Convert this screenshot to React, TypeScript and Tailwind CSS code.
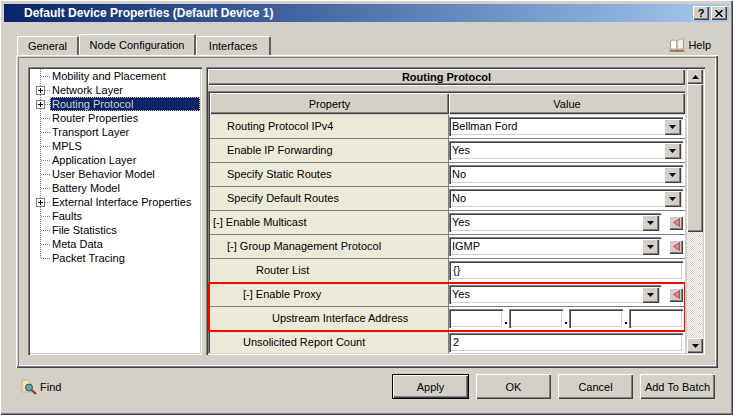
import type { ReactNode } from 'react'

const raised = 'shadow-[inset_1px_1px_0_#ffffff,inset_-1px_-1px_0_#404040,inset_-2px_-2px_0_#808080]'
const sunken = 'shadow-[inset_1px_1px_0_#808080,inset_2px_2px_0_#404040,inset_-1px_-1px_0_#ffffff,inset_-2px_-2px_0_#d4d0c8]'

const treeItems = [
  { label: 'Mobility and Placement' },
  { label: 'Network Layer', plus: true },
  { label: 'Routing Protocol', plus: true, selected: true },
  { label: 'Router Properties' },
  { label: 'Transport Layer' },
  { label: 'MPLS' },
  { label: 'Application Layer' },
  { label: 'User Behavior Model' },
  { label: 'Battery Model' },
  { label: 'External Interface Properties', plus: true },
  { label: 'Faults' },
  { label: 'File Statistics' },
  { label: 'Meta Data' },
  { label: 'Packet Tracing', last: true },
]

type Row = { label: string; pad: string; value?: string; kind: 'select' | 'selectArrow' | 'text' | 'ip' }

const rows: Row[] = [
  { label: 'Routing Protocol IPv4', pad: 'pl-[17px]', value: 'Bellman Ford', kind: 'select' },
  { label: 'Enable IP Forwarding', pad: 'pl-[17px]', value: 'Yes', kind: 'select' },
  { label: 'Specify Static Routes', pad: 'pl-[17px]', value: 'No', kind: 'select' },
  { label: 'Specify Default Routes', pad: 'pl-[17px]', value: 'No', kind: 'select' },
  { label: '[-] Enable Multicast', pad: 'pl-[3px]', value: 'Yes', kind: 'selectArrow' },
  { label: '[-] Group Management Protocol', pad: 'pl-[17px]', value: 'IGMP', kind: 'selectArrow' },
  { label: 'Router List', pad: 'pl-[46px]', value: '{}', kind: 'text' },
  { label: '[-] Enable Proxy', pad: 'pl-[33px]', value: 'Yes', kind: 'selectArrow' },
  { label: 'Upstream Interface Address', pad: 'pl-[62px]', kind: 'ip' },
  { label: 'Unsolicited Report Count', pad: 'pl-[33px]', value: '2', kind: 'text' },
]

function Arrow({ up }: { up?: boolean }) {
  return (
    <svg width="7" height="4" viewBox="0 0 7 4" className={up ? 'rotate-180' : ''}>
      <path d="M0 0h7L3.5 4z" fill="#000" />
    </svg>
  )
}

function TreeLines({ plus, last }: { plus?: boolean; last?: boolean }) {
  return (
    <svg width="20" height="14" className="shrink-0">
      <path d={last ? 'M10.5 0V7.5' : 'M10.5 0V14'} stroke="#808080" strokeDasharray="1 1" fill="none" />
      <path d="M11 7.5H20" stroke="#808080" strokeDasharray="1 1" fill="none" />
      {plus && (
        <>
          <rect x="6.5" y="3.5" width="8" height="8" fill="#fff" stroke="#808080" />
          <path d="M8 7.5H13M10.5 5V10" stroke="#000" fill="none" />
        </>
      )}
    </svg>
  )
}

function HelpBook() {
  return (
    <svg width="16" height="14" viewBox="0 0 16 14">
      <path d="M0.5 12.5H15.5V13.5H0.5z" fill="#8a4a20" />
      <path d="M1.5 3C4 1.5 6.5 2 8 3.5V12C6.5 10.8 4 10.5 1.5 11.5z" fill="#fff" stroke="#a09890" />
      <path d="M8 3.5C9.5 1 12 0.5 14.5 1V11.5C12 10.5 9.5 10.8 8 12z" fill="#f4f0e8" stroke="#a09890" />
      <path d="M2 12.5L8 12.8L14 12.5" stroke="#b06030" fill="none" />
    </svg>
  )
}

function SelectBox({ value, wide }: { value?: string; wide?: boolean }) {
  return (
    <div className={`h-[19px] ${wide ? 'w-[234px]' : 'w-[212px]'} ${sunken} flex items-center justify-between pl-[3px] pr-[2px] bg-white`}>
      <span className="pb-[2px]">{value}</span>
      <div className={`w-[17px] h-[16px] bg-[#d4d0c8] ${raised} flex items-center justify-center`}>
        <Arrow />
      </div>
    </div>
  )
}

function ValueCell({ row }: { row: Row }) {
  if (row.kind === 'select') return <SelectBox value={row.value} wide />
  if (row.kind === 'selectArrow') {
    return (
      <div className="flex items-center">
        <SelectBox value={row.value} />
        <div className={`ml-[8px] w-[14px] h-[14px] bg-[#d4d0c8] ${raised} flex items-center justify-center`}>
          <svg width="7" height="9" viewBox="0 0 7 9">
            <path d="M6.5 0.5V8.5L0.5 4.5z" fill="#f08088" stroke="#a05058" />
          </svg>
        </div>
      </div>
    )
  }
  if (row.kind === 'ip') {
    return (
      <div className="flex items-center">
        {[0, 1, 2, 3].map((i) => (
          <div key={i} className="flex items-center">
            {i > 0 && <div className="w-[6px] flex justify-center items-end h-[19px] pb-[4px]"><div className="w-[2px] h-[2px] bg-black" /></div>}
            <div className={`w-[54px] h-[19px] ${sunken} bg-white`} />
          </div>
        ))}
      </div>
    )
  }
  return <div className={`h-[19px] w-[234px] ${sunken} flex items-center pl-[4px] pb-[2px] bg-white`}>{row.value}</div>
}

function Button({ children, primary }: { children: ReactNode; primary?: boolean }) {
  return (
    <div className={`h-[25px] flex items-center justify-center bg-[#d4d0c8] ${raised} ${primary ? 'w-[77px] border border-black' : 'w-[75px]'}`}>
      {children}
    </div>
  )
}

export default function App() {
  return (
    <div className={`w-[733px] h-[415px] overflow-hidden bg-[#d4d0c8] p-[4px] text-[11px] leading-[14px] text-black whitespace-nowrap ${raised} font-['Liberation_Sans',Arial,sans-serif]`}>
      {/* title bar */}
      <div className="h-[18px] bg-gradient-to-r from-[#0a246a] to-[#a6caf0] flex items-center justify-between pl-[20px] pr-[2px]">
        <span className="text-white font-bold text-[12px]">Default Device Properties (Default Device 1)</span>
        <div className="flex gap-[2px]">
          <div className={`w-[16px] h-[14px] bg-[#d4d0c8] ${raised} flex items-center justify-center font-bold text-[11px]`}>?</div>
          <div className={`w-[16px] h-[14px] bg-[#d4d0c8] ${raised} flex items-center justify-center`}>
            <svg width="8" height="7" viewBox="0 0 8 7"><path d="M0.5 0L7.5 7M7.5 0L0.5 7" stroke="#000" strokeWidth="1.4" /></svg>
          </div>
        </div>
      </div>

      {/* tabs */}
      <div className="h-[33px] pl-[13px] flex items-end justify-between relative">
        <div className="flex items-end">
          <div className="w-[62px] h-[19px] bg-[#d4d0c8] border-t border-l border-white border-r-2 border-r-[#606060] rounded-t-[2px] flex items-center justify-center">General</div>
          <div className="w-[117px] h-[21px] bg-[#d4d0c8] border-t border-l border-white border-r-2 border-r-[#606060] rounded-t-[2px] flex items-center justify-center">Node Configuration</div>
          <div className="w-[75px] h-[19px] bg-[#d4d0c8] border-t border-l border-white border-r-2 border-r-[#606060] rounded-t-[2px] flex items-center justify-center">Interfaces</div>
        </div>
        <div className="flex items-center gap-[3px] pr-[18px] pb-[3px]">
          <HelpBook />
          <span>Help</span>
        </div>
      </div>

      {/* tab panel */}
      <div className={`ml-[12px] w-[702px] h-[313px] p-[2px] ${raised}`}>
        <div className="h-full shadow-[inset_1px_1px_0_#808080,inset_-1px_-1px_0_#ffffff] pl-[10px] pt-[10px] flex gap-[4px]">
          {/* tree */}
          <div className={`w-[174px] h-[288px] bg-white ${sunken} pl-[2px] overflow-hidden`}>
            <div className="pt-[2px]">
              {treeItems.map((item) => (
                <div key={item.label} className="h-[14px] flex items-center">
                  <TreeLines plus={item.plus} last={item.last} />
                  <span className={item.selected ? 'w-[150px] h-[14px] bg-[#0a246a] text-[#d4d0c8] outline-1 outline-dotted outline-offset-[-1px] outline-[#d4c080] pl-[2px]' : 'pl-[2px]'}>
                    {item.label}
                  </span>
                </div>
              ))}
            </div>
          </div>

          {/* property pane */}
          <div className={`w-[499px] h-[288px] ${sunken} p-[2px] flex`}>
            <div className="w-[479px] flex flex-col">
              <div className={`h-[16px] bg-[#d4d0c8] ${raised} flex items-center justify-center font-bold`}>Routing Protocol</div>
              <div className="h-[6px] border-t border-white" />
              <div className={`relative flex-1 overflow-hidden ${sunken} pl-[2px] pt-[2px]`}>
                <div className="grid grid-cols-[239px_236px] h-[21px] mb-[1px]">
                  <div className={`bg-[#d4d0c8] ${raised} flex items-center justify-center`}>Property</div>
                  <div className={`bg-[#d4d0c8] ${raised} flex items-center justify-center`}>Value</div>
                </div>
                {rows.map((row) => (
                  <div key={row.label} className="grid grid-cols-[239px_236px] h-[24px] border-b border-[#808080]">
                    <div className={`bg-[#ece9d8] border-r border-[#808080] flex items-center pb-[2px] ${row.pad}`}>{row.label}</div>
                    <div className="bg-white flex items-center"><ValueCell row={row} /></div>
                  </div>
                ))}
                {/* red highlight */}
                <div className="absolute left-[0px] top-[191px] w-[478px] h-[50px] border-2 border-[#ff0000] pointer-events-none" />
              </div>
            </div>
            {/* scrollbar */}
            <div className="w-[16px] ml-[2px] flex flex-col">
              <div className={`h-[15px] bg-[#d4d0c8] ${raised} flex items-center justify-center`}><Arrow up /></div>
              <div className={`h-[148px] bg-[#d4d0c8] ${raised}`} />
              <div className="flex-1 bg-[repeating-conic-gradient(#d4d0c8_0_25%,#ffffff_0_50%)] bg-[length:2px_2px]" />
              <div className={`h-[15px] bg-[#d4d0c8] ${raised} flex items-center justify-center`}><Arrow /></div>
            </div>
          </div>
        </div>
      </div>

      {/* footer */}
      <div className="flex items-center justify-between pl-[17px] pr-[14px] pt-[6px]">
        <div className="flex items-center gap-[3px]">
          <svg width="16" height="16" viewBox="0 0 16 16">
            <path d="M1 1h6l3 3v9H1z" fill="#f4e4a8" stroke="#b8b090" />
            <circle cx="8" cy="8.5" r="3.5" fill="#50a8c0" stroke="#404850" />
            <path d="M10.5 11L15 15" stroke="#804020" strokeWidth="2" />
          </svg>
          <span>Find</span>
        </div>
        <div className="flex gap-[7px]">
          <Button primary>Apply</Button>
          <Button>OK</Button>
          <Button>Cancel</Button>
          <Button>Add To Batch</Button>
        </div>
      </div>
    </div>
  )
}
